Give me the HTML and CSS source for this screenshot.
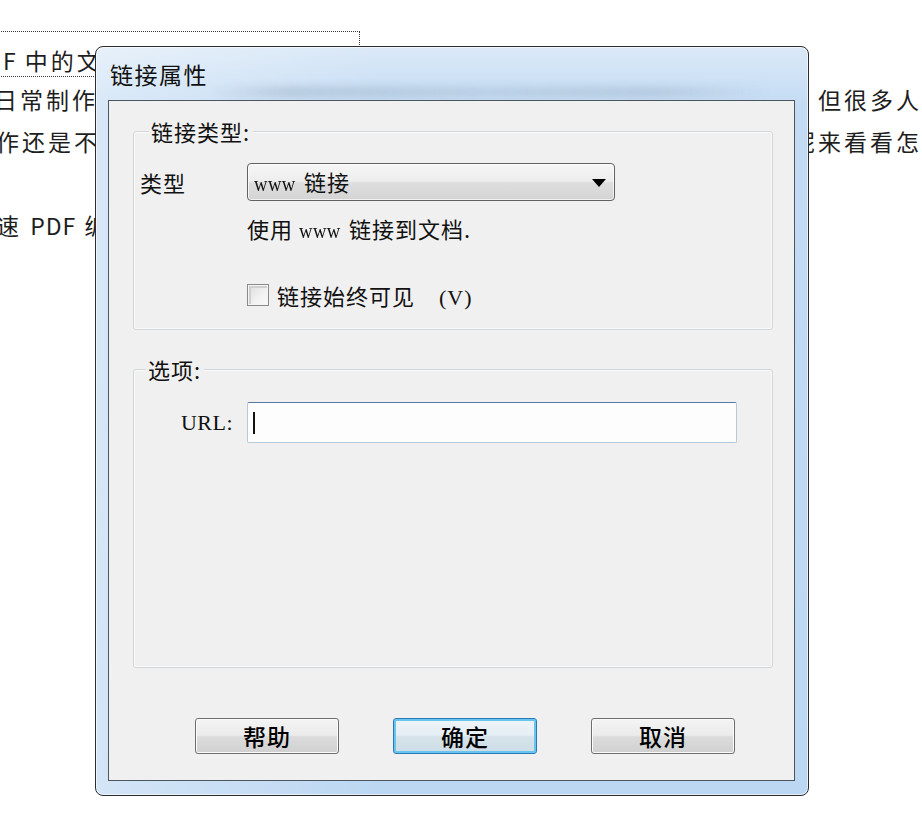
FILE: index.html
```html
<!DOCTYPE html>
<html lang="zh-CN">
<head>
<meta charset="utf-8">
<title>链接属性</title>
<link rel="stylesheet" href="styles.css">
</head>
<body>
<div class="page">
  <div class="link-box"><span class="cut"><span class="en">F</span> 中的文件链接添加</span></div>
  <div class="line"><span class="left">日常制作文档时，经常需要在 PDF 文件里添加链接，</span><span class="right">但很多人</span></div>
  <div class="line"><span class="left">作还是不太熟悉，下面就以迅捷 PDF 编辑器为例，一起</span><span class="right">呢来看看怎</span></div>
  <div class="line"></div>
  <div class="line"><span class="left">速 <span class="en">PDF</span> 编辑器</span></div>
</div>

<div class="dialog">
  <div class="glass-blur"></div>
  <div class="titlebar">链接属性</div>
  <div class="client">
    <fieldset class="group group-type">
      <legend>链接类型:</legend>
      <div class="row">
        <span class="row-label">类型</span>
        <div class="select">
          <span class="select-text"><span class="latin narrow">www</span>&nbsp;链接</span>
          <span class="arrow"></span>
        </div>
      </div>
      <div class="desc">使用 <span class="latin narrow">www</span> 链接到文档.</div>
      <label class="check-row">
        <span class="checkbox"></span>
        <span>链接始终可见 <span class="paren">(V)</span></span>
      </label>
    </fieldset>
    <fieldset class="group group-options">
      <legend>选项:</legend>
      <div class="url-row">
        <span class="url-label latin">URL:</span>
        <div class="input"><span class="caret"></span></div>
      </div>
    </fieldset>
    <div class="buttons">
      <button class="btn">帮助</button>
      <button class="btn btn-default">确定</button>
      <button class="btn">取消</button>
    </div>
  </div>
</div>
</body>
</html>
```

FILE: styles.css
```css
html, body {
  margin: 0;
  padding: 0;
  background: #ffffff;
}

body {
  width: 922px;
  height: 836px;
  overflow: hidden;
  position: relative;
  font-family: "Noto Sans CJK SC", "Noto Sans", sans-serif;
  color: #1a1a1a;
}

/* ---------- background document ---------- */
.page {
  padding-top: 31px;
  font-size: 23px;
  letter-spacing: 3px;
  color: #1e1e1e;
}

.en {
  letter-spacing: 1px;
}

.link-box {
  margin-left: -12px;
  width: 372px;
  height: 46px;
  box-sizing: border-box;
  border: 1px dotted #333;
  padding: 13px 0 0 10px;
  line-height: 30px;
  white-space: nowrap;
  overflow: hidden;
}

.cut {
  display: inline-block;
  margin-left: 4px;
}

.line {
  height: 42px;
  line-height: 42px;
  white-space: nowrap;
  display: flex;
}

.line:nth-child(2) {
  margin-top: 1px;
}

.left {
  display: inline-block;
  margin-left: -6px;
  overflow: hidden;
}

.line:nth-child(2) .left { width: 824px; }
.line:nth-child(3) .left { width: 801px; margin-left: -4px; }
.line:nth-child(5) .left { margin-left: -4px; }

/* ---------- dialog ---------- */
.dialog {
  position: absolute;
  left: 95px;
  top: 46px;
  width: 714px;
  height: 750px;
  box-sizing: border-box;
  border: 1px solid #2c2c2c;
  border-radius: 8px;
  padding: 0 13px 14px 12px;
  display: flex;
  flex-direction: column;
  background:
    linear-gradient(90deg, rgba(255,255,255,0.35) 0%, rgba(255,255,255,0) 40%),
    linear-gradient(180deg, #dbe9f7 0px, #cfe2f6 30px, #c3dbf3 60px, #bcd7f2 100%);
  box-shadow: inset 0 0 0 1px rgba(255,255,255,0.6);
  overflow: hidden;
}

.glass-blur {
  position: absolute;
  left: 110px;
  right: 40px;
  top: 40px;
  height: 10px;
  background: linear-gradient(90deg, rgba(110,130,150,0.0), rgba(110,130,150,0.28) 15%, rgba(110,130,150,0.18) 50%, rgba(110,130,150,0.24) 80%, rgba(110,130,150,0));
  filter: blur(4px);
}

.titlebar {
  position: relative;
  height: 53px;
  box-sizing: border-box;
  padding: 11px 0 0 2px;
  font-size: 23px;
  line-height: 32px;
  letter-spacing: 1.5px;
  color: #111;
}

.client {
  position: relative;
  flex: 1;
  display: flex;
  flex-direction: column;
  background: #f0f0f0;
  border: 1px solid #4d5560;
  padding: 17px 21px 0 24px;
  font-size: 22px;
  letter-spacing: 1px;
  color: #111;
}

.latin {
  font-family: "Liberation Serif", "DejaVu Serif", serif;
  letter-spacing: 0.5px;
}

.narrow {
  display: inline-block;
  transform: scaleX(0.85);
  transform-origin: left center;
  margin-right: -5px;
}

/* group boxes */
.group {
  margin: 0;
  padding: 0;
  border: 1px solid #d3d6d9;
  border-radius: 3px;
  box-shadow: inset 0 0 0 1px #fafafa;
  min-width: 0;
}

.group legend {
  margin-left: 9px;
  padding: 0 3px 0 2px;
  line-height: 26px;
  background: #f0f0f0;
  position: relative;
}

.group-options legend {
  margin-left: 12px;
}

.group-type {
  padding: 19px 0 21px 6px;
}

.row {
  display: flex;
  align-items: center;
  height: 38px;
}

.row-label {
  width: 107px;
  flex: none;
}

.select {
  width: 368px;
  height: 38px;
  box-sizing: border-box;
  border: 1px solid #626262;
  border-radius: 4px;
  display: flex;
  align-items: center;
  justify-content: space-between;
  padding: 0 8px 0 6px;
  background: linear-gradient(180deg, #f6f6f6 0%, #ededed 48%, #dedede 52%, #d4d4d4 100%);
  box-shadow: inset 0 0 0 1px rgba(255,255,255,0.7);
}

.select-text {
  line-height: 30px;
}

.arrow {
  width: 0;
  height: 0;
  border-left: 7px solid transparent;
  border-right: 7px solid transparent;
  border-top: 8px solid #000;
  margin-top: 2px;
}

.desc {
  margin: 14px 0 0 107px;
  line-height: 26px;
}

.check-row {
  display: flex;
  align-items: center;
  margin: 38px 0 0 107px;
  height: 26px;
}

.checkbox {
  width: 22px;
  height: 22px;
  box-sizing: border-box;
  border: 1px solid #8a8a8a;
  background: linear-gradient(135deg, #dcdcdc 0%, #f2f2f2 60%, #fafafa 100%);
  box-shadow: inset 0 0 0 1px #f4f4f4, inset 1px 1px 0 2px #cfcfcf;
  margin-right: 8px;
  flex: none;
}

.paren {
  font-family: "Liberation Serif", serif;
  margin-left: 18px;
  letter-spacing: 1px;
}

.group-options {
  margin-top: 26px;
  flex: 1;
  padding: 20px 0 0 0;
}

.url-row {
  display: flex;
  align-items: center;
}

.url-label {
  width: 99px;
  text-align: right;
  margin-right: 14px;
  flex: none;
}

.input {
  width: 490px;
  height: 41px;
  box-sizing: border-box;
  background: #fdfdfe;
  border: 1px solid #b7c8d8;
  border-top-color: #57799e;
  border-radius: 2px;
  display: flex;
  align-items: center;
  padding-left: 5px;
}

.caret {
  width: 2px;
  height: 22px;
  background: #111;
}

/* buttons */
.buttons {
  display: flex;
  gap: 54px;
  padding-left: 62px;
  margin-top: 50px;
  margin-bottom: 26px;
}

.btn {
  width: 144px;
  height: 36px;
  box-sizing: border-box;
  border: 1px solid #6e6e6e;
  border-radius: 3px;
  background: linear-gradient(180deg, #f4f4f4 0%, #ebebeb 48%, #dcdcdc 52%, #d0d0d0 100%);
  box-shadow: inset 0 0 0 1px #fbfbfb;
  font-family: "Noto Sans CJK SC", sans-serif;
  font-size: 23px;
  font-weight: 500;
  color: #000;
  line-height: 30px;
  padding: 0;
  letter-spacing: 1px;
}

.btn-default {
  border-color: #2b78b4;
  background: linear-gradient(180deg, #eef5f9 0%, #e4eef4 48%, #d6e3ea 52%, #cddde6 100%);
  box-shadow: inset 0 0 0 2px #67c5ef;
}
```
